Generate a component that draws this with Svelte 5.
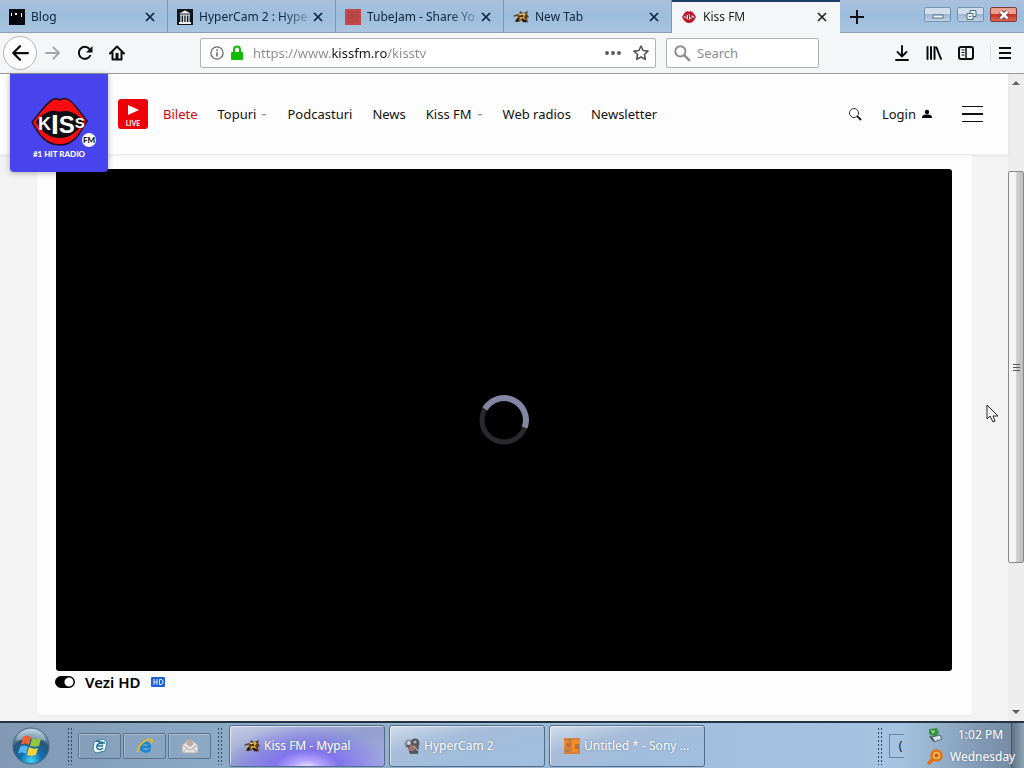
<script lang="ts">
  const tabs = [
    { title: 'Blog', icon: 'blog' },
    { title: 'HyperCam 2 : Hype', icon: 'archive' },
    { title: 'TubeJam - Share Yo', icon: 'jam' },
    { title: 'New Tab', icon: 'mypal' },
    { title: 'Kiss FM', icon: 'kiss' },
  ];

  const links = [
    { label: 'Bilete', hot: true },
    { label: 'Topuri', menu: true },
    { label: 'Podcasturi' },
    { label: 'News' },
    { label: 'Kiss FM', menu: true },
    { label: 'Web radios' },
    { label: 'Newsletter' },
  ];

  const tasks = [
    { title: 'Kiss FM - Mypal', icon: 'mypal' },
    { title: 'HyperCam 2', icon: 'camera' },
    { title: 'Untitled * - Sony ...', icon: 'vegas' },
  ];

  let current = $state('Kiss FM');
  let task = $state('Kiss FM - Mypal');
  let url = $state('https://www.kissfm.ro/kisstv');
  let search = $state('');
  let hd = $state(true);
</script>

{#snippet icon(name: string)}
  <svg class="icon" viewBox="0 0 16 16" width="16" height="16" aria-hidden="true">
    {#if name === 'blog'}
      <rect width="16" height="16" fill="#05070c" />
      <path d="M2 4h1v3H2zM6 4h2v2H6zM12 4h1v4h-1z" fill="#fff" />
    {:else if name === 'archive'}
      <rect width="16" height="16" fill="#10151e" />
      <path d="M2 4.500 8 1.500l6 3zM2 13h12v2H2zM3 5.500h10v1H3z" fill="#eef2f6" />
      <path d="M4 6v7M6.700 6v7M9.300 6v7M12 6v7" stroke="#dfe5eb" stroke-width="1.300" />
    {:else if name === 'jam'}
      <rect width="16" height="16" fill="#c8474b" />
      <path d="M2 3h12M3 6h4v3H3zM9 6h4v3H9zM2 12h12" fill="none" stroke="#9b4a3c" stroke-width="1.200" />
    {:else if name === 'mypal'}
      <path d="M0 7c2-1 3-2 6-2l1-3 3 2 5-2-1 3 2 3-2 1 1 5-3-2-2 2-1-3-3 2H2l2-4z" fill="#57402a" />
      <path d="M5 6l4-2 4 1-2 3 2 3-4-1-4 2 2-3z" fill="#d6a233" />
      <path d="M6 7h4M3 12l3-2M9 10l4 3" stroke="#15100c" stroke-width="1.600" />
      <path d="M6 5l2 1M11 4l1 1M2 8h3" stroke="#f8efd2" />
    {:else if name === 'kiss'}
      <path d="M1 8c2-4 4-6 6-6l1 1 1-1c2 0 4 2 6 6-2 4-4 6-7 6S3 12 1 8z" fill="#c3152b" />
      <path d="M2.500 8q5.500-5 11 0-5.500 5-11 0z" fill="#f3dfe2" />
      <path d="M5 6v4M7.500 6v4M11 6H9.500v2H11v2H9.500" stroke="#731525" fill="none" />
    {:else if name === 'camera'}
      <circle cx="5" cy="6" r="4.500" fill="#8a8f95" />
      <circle cx="11" cy="5" r="4.500" fill="#55595f" />
      <path d="M2 7h13l-1 9H6z" fill="#555a61" />
      <circle cx="8" cy="10" r="3" fill="#a8706a" />
      <circle cx="5" cy="5" r="1.700" fill="#d8dce0" />
      <circle cx="11" cy="4" r="1.500" fill="#aeb4ba" />
      <path d="M10 8l4 5M3 9l2 4" stroke="#c5cad0" />
    {:else}
      <rect width="16" height="16" fill="#d98036" />
      <path d="M0 3h5v3h3V2h8v6h-3v6H8V9H0z" fill="#f28a25" />
      <path d="M2 5h5v4H2zM11 6h4v5h-4z" fill="#b5713f" />
      <path d="M1 13h4M4 2h3" stroke="#a37c61" stroke-width="2" />
    {/if}
  </svg>
{/snippet}

{#snippet cross()}
  <svg viewBox="0 0 12 12" width="12" height="12" aria-hidden="true">
    <path d="M2 2l8 8M10 2l-8 8" stroke="currentColor" stroke-width="1.700" />
  </svg>
{/snippet}

<div class="screen">
  <div class="tabbar">
    {#each tabs as tab}
      <div class="tab" class:active={current === tab.title}>
        <button class="tab-name" onclick={() => (current = tab.title)}>
          {@render icon(tab.icon)}
          <span>{tab.title}</span>
        </button>
        <button class="close" aria-label="Close {tab.title}">{@render cross()}</button>
      </div>
    {/each}
    <button class="new-tab" aria-label="Open a new tab">
      <svg viewBox="0 0 16 16" width="16" height="16"><path d="M8 1v14M1 8h14" stroke="#111" stroke-width="2" /></svg>
    </button>
    <div class="window-buttons">
      <button aria-label="Minimize">
        <svg viewBox="0 0 24 12" width="24" height="12"><rect x="7" y="6" width="10" height="3" fill="#eef5fa" stroke="#58708a" /></svg>
      </button>
      <button aria-label="Restore">
        <svg viewBox="0 0 24 12" width="24" height="12"><path d="M11 1.500h6v6h-3v3H8v-6h3zM11 4.500h3v3M10 7.500h2" fill="#e6eff6" stroke="#526a84" /></svg>
      </button>
      <button class="quit" aria-label="Close window">
        <svg viewBox="0 0 24 12" width="24" height="12"><path d="M8.500 2.500l7 7M15.500 2.500l-7 7" stroke="#7d2f2c" stroke-width="4.500" /><path d="M8.500 2.500l7 7M15.500 2.500l-7 7" stroke="#fff" stroke-width="2.600" /></svg>
      </button>
    </div>
  </div>

  <div class="toolbar">
    <div class="navigation">
      <button class="back" aria-label="Back">
        <svg viewBox="0 0 16 16" width="18" height="18"><path d="M15 8H2M8 2 2 8l6 6" stroke="#0c0c0d" stroke-width="2" fill="none" stroke-linecap="round" stroke-linejoin="round" /></svg>
      </button>
      <button aria-label="Forward">
        <svg viewBox="0 0 16 16" width="16" height="16"><path d="M1 8h13M8.500 2.500 14 8l-5.500 5.500" stroke="#a5a5a5" stroke-width="1.800" fill="none" stroke-linecap="round" stroke-linejoin="round" /></svg>
      </button>
      <button aria-label="Reload">
        <svg viewBox="0 0 16 16" width="16" height="16"><path d="M13.500 10A6 6 0 1 1 12.500 4" stroke="#0c0c0d" stroke-width="2" fill="none" /><path d="M15.500 1v6.500H9z" fill="#0c0c0d" /></svg>
      </button>
      <button aria-label="Home">
        <svg viewBox="0 0 16 16" width="16" height="16"><path d="M1 8.500 8 1.500l7 7M3.500 7v7.500h9V7" stroke="#0c0c0d" stroke-width="2" fill="none" stroke-linejoin="round" stroke-linecap="round" /><path d="M6.500 8h3v6h-3z" fill="#0c0c0d" /></svg>
      </button>
    </div>

    <div class="field address">
      <svg viewBox="0 0 16 16" width="14" height="14"><circle cx="8" cy="8" r="7" fill="none" stroke="#666" stroke-width="1.400" /><path d="M8 7v5M8 4v1.700" stroke="#555" stroke-width="1.600" /></svg>
      <svg viewBox="0 0 14 16" width="14" height="16"><path d="M4 7V4.500a3 3 0 0 1 6 0V7" fill="none" stroke="#12bc00" stroke-width="2" /><rect x="1" y="7" width="12" height="8" rx="1" fill="#12bc00" /></svg>
      <input class="url" type="text" aria-label="Address" bind:value={url} />
      <button aria-label="Page actions">
        <svg viewBox="0 0 16 16" width="16" height="16"><circle cx="2" cy="8" r="1.900" fill="#555" /><circle cx="8" cy="8" r="1.900" fill="#555" /><circle cx="14" cy="8" r="1.900" fill="#555" /></svg>
      </button>
      <button aria-label="Bookmark this page">
        <svg viewBox="0 0 16 16" width="16" height="16"><path d="M8 1l2.100 4.500 4.900.6-3.600 3.400.9 4.900L8 12l-4.300 2.400.9-4.900L1 6.100l4.900-.6z" fill="none" stroke="#555" stroke-width="1.600" stroke-linejoin="round" /></svg>
      </button>
    </div>

    <div class="field find">
      <svg viewBox="0 0 16 16" width="17" height="17"><circle cx="6" cy="6" r="4.800" fill="none" stroke="#8b8b8b" stroke-width="1.800" /><path d="M9.500 9.500 15 15" stroke="#8b8b8b" stroke-width="2.200" /></svg>
      <input type="text" aria-label="Search" placeholder="Search" bind:value={search} />
    </div>

    <div class="tools">
      <button aria-label="Downloads">
        <svg viewBox="0 0 16 16" width="16" height="16"><path d="M8 1v10M3.500 7 8 11.500 12.500 7M2 15h12" fill="none" stroke="#0c0c0d" stroke-width="1.900" stroke-linecap="round" /></svg>
      </button>
      <button aria-label="Library">
        <svg viewBox="0 0 16 16" width="16" height="16"><path d="M1.500 2v12M5 2v12M8.500 2v12M10.500 2.500l4.500 11.500" stroke="#0c0c0d" stroke-width="2" stroke-linecap="round" /></svg>
      </button>
      <button aria-label="Sidebars">
        <svg viewBox="0 0 16 16" width="16" height="16"><rect x="1" y="2" width="14" height="12" rx="2" fill="none" stroke="#0c0c0d" stroke-width="2" /><path d="M8 2v12" stroke="#0c0c0d" stroke-width="1.500" /><path d="M3.500 5h3M3.500 7.500h3M3.500 10h3" stroke="#0c0c0d" /></svg>
      </button>
      <button class="app-menu" aria-label="Open menu">
        <svg viewBox="0 0 16 16" width="16" height="16"><path d="M2 3h12M2 8h12M2 13h12" stroke="#0c0c0d" stroke-width="2" /></svg>
      </button>
    </div>
  </div>

  <div class="viewport">
    <div class="page">
      <header>
        <a class="logo" href="/" aria-label="Kiss FM">
          <svg viewBox="0 0 98 98" width="98" height="98">
            <path d="M22 48c6-6 12-17 20-22 3-2 5-2 8 0 3-2 6-2 9 0 7 5 12 14 18 21-7 11-12 24-27 24S28 59 22 48z" fill="#f80d12" stroke="#191023" stroke-width="1.500" />
            <path d="M26 48c5-7 13-12 20-11q4 1 8 0c8-1 15 5 20 10-6 10-13 17-24 17S32 58 26 48z" fill="#120d14" />
            <text class="kiss" x="28" y="56">
              <tspan font-size="18">K</tspan><tspan font-size="28" dy="4">I</tspan><tspan font-size="24" dy="-1">S</tspan><tspan font-size="15" dy="-5">S</tspan>
            </text>
            <circle cx="79" cy="66" r="7" fill="#fff" />
            <text class="fm" x="79" y="69" text-anchor="middle">FM</text>
            <text class="slogan" x="49" y="83" text-anchor="middle">#1 HIT RADIO</text>
          </svg>
        </a>
        <a class="live" href="/live">
          <svg viewBox="0 0 12 12" width="12" height="12" aria-hidden="true"><path d="M1 1l11 5-11 5z" fill="#fff" /></svg>
          <span>LIVE</span>
        </a>
        <nav>
          {#each links as link}
            <a href="/" class:hot={link.hot}>{link.label}{#if link.menu}<i></i>{/if}</a>
          {/each}
        </nav>
        <div class="account">
          <button aria-label="Search the site">
            <svg viewBox="0 0 14 14" width="14" height="14"><circle cx="6" cy="6" r="4.500" fill="none" stroke="#333" /><path d="M9.200 9.200 13 13" stroke="#111" stroke-width="1.800" /></svg>
          </button>
          <a href="/login">
            Login
            <svg viewBox="0 0 10 10" width="10" height="10" aria-hidden="true"><circle cx="5" cy="3" r="2.200" fill="#000" /><path d="M0 9c0-3 2-3.500 5-3.500s5 .5 5 3.500z" fill="#000" /></svg>
          </a>
          <button class="burger" aria-label="Menu"><i></i><i></i><i></i></button>
        </div>
      </header>

      <main>
        <div class="player">
          <svg viewBox="0 0 52 52" width="52" height="52" role="img" aria-label="Loading">
            <circle cx="26" cy="26" r="22" fill="none" stroke="#29292d" stroke-width="5" />
            <path d="M7 15A22 22 0 0 1 46.700 33.500" fill="none" stroke="#8486a5" stroke-width="6" />
          </svg>
        </div>
        <label class="quality">
          <input type="checkbox" bind:checked={hd} />
          <span>Vezi HD</span>
          <svg viewBox="0 0 14 10" width="14" height="10" aria-hidden="true">
            <rect width="14" height="10" rx="1" fill="#1b62d8" />
            <path d="M3 2v6M6 2v6M3 5h3M8.500 2.500h1.500q2 0 2 2.500t-2 2.500H8.500z" fill="none" stroke="#e9f1ff" />
          </svg>
        </label>
      </main>
    </div>

    <div class="scrollbar">
      <svg viewBox="0 0 8 5" width="8" height="5"><path d="M0 5l4-4 4 4z" fill="#606468" /></svg>
      <div class="track"><div class="thumb"><i></i><i></i><i></i></div></div>
      <svg viewBox="0 0 8 5" width="8" height="5"><path d="M0 0l4 4 4-4z" fill="#55595d" /></svg>
    </div>
  </div>

  <div class="taskbar">
    <button class="start" aria-label="Start">
      <svg viewBox="0 0 38 38" width="38" height="38">
        <defs>
          <radialGradient id="orb" cx="0.5" cy="0.9" r="0.85">
            <stop offset="0" stop-color="#3fd6f5" />
            <stop offset="0.35" stop-color="#146fae" />
            <stop offset="0.7" stop-color="#275477" />
            <stop offset="1" stop-color="#a9c4d6" />
          </radialGradient>
        </defs>
        <circle cx="19" cy="19" r="18" fill="url(#orb)" stroke="#47637e" />
        <path d="M4 14C7 5 14 2 19 2s12 3 15 12c-9-3-21-3-30 0z" fill="#d3e2ec" opacity="0.45" />
        <path d="M11 10c3-2 5-1 8 0l-2 8c-3-2-5-2-8 0z" fill="#ee6130" />
        <path d="M20 11c4 2 6 1 9 0l-2 8c-3 1-6 1-9 0z" fill="#92c83e" />
        <path d="M8 20c3-2 5-2 8 0l-2 7c-3-2-5-2-8 0z" fill="#55b5ef" />
        <path d="M17 20c4 2 6 2 9 1l-2 7c-3 1-6 1-9 0z" fill="#ffd23c" />
      </svg>
    </button>
    <span class="grip"></span>
    <div class="quick">
      <button aria-label="Show desktop">
        <svg viewBox="0 0 18 18" width="18" height="18"><path d="M3 5l9-3 4 3-2 9-9 2-3-3z" fill="#edf7fb" stroke="#3481a5" /><path d="M12 7c-4-2-7 1-6 4 1 2 4 2 6 0M7 9h5M5 4l9 2" fill="none" stroke="#256f98" stroke-width="1.500" /></svg>
      </button>
      <button aria-label="Internet Explorer">
        <svg viewBox="0 0 18 18" width="18" height="18"><path d="M14 12c-2 4-9 3-9-2s8-6 9 0H6" fill="none" stroke="#1687cf" stroke-width="2.600" /><path d="M2 15C1 9 11 0 16 3c1 1 0 2-1 3" fill="none" stroke="#eab62e" stroke-width="1.800" /></svg>
      </button>
      <button aria-label="Mail">
        <svg viewBox="0 0 18 18" width="18" height="18"><path d="M1 8l8-6 8 6v8H1z" fill="#e7e4df" stroke="#aaa9aa" /><path d="M5 7l4-6 4 6-4 3z" fill="#c1a9a0" /><path d="M1 8l8 5 8-5M1 16l6-5M17 16l-6-5" fill="none" stroke="#a5a7ac" /></svg>
      </button>
    </div>
    <span class="grip"></span>
    <div class="tasks">
      {#each tasks as item}
        <button class:active={task === item.title} onclick={() => (task = item.title)}>
          {@render icon(item.icon)}
          <span>{item.title}</span>
        </button>
      {/each}
    </div>
    <span class="grip"></span>
    <button class="language" aria-label="Language">(</button>
    <div class="tray">
      <svg viewBox="0 0 16 16" width="16" height="16"><path d="M2 2l8-1 2 5-4 4-6-3z" fill="#349340" /><path d="M4 3l4 1-2 3z" fill="#a5df8c" /><path d="M5 10l8-2 2 4-8 3z" fill="#d7e2e8" stroke="#496172" /><path d="M3 9l4 5" stroke="#465361" stroke-width="2" /></svg>
      <span>1:02 PM</span>
      <svg viewBox="0 0 16 16" width="16" height="16"><circle cx="9.500" cy="6.500" r="5" fill="#f5b95e" stroke="#e07114" stroke-width="2.500" /><circle cx="9.500" cy="6.500" r="2" fill="#c9560d" /><path d="M6 10l-5 5" stroke="#e07114" stroke-width="3.500" /></svg>
      <span>Wednesday</span>
    </div>
    <button class="desktop" aria-label="Show the desktop"></button>
  </div>

  <svg class="pointer" viewBox="0 0 13 19" width="13" height="19" aria-hidden="true">
    <path d="M1 1v14l3-3 3 6 2-1-2-5h5z" fill="#fff" stroke="#222" />
  </svg>
</div>

<style>
  :global(body) {
    margin: 0;
  }

  .screen {
    position: relative;
    display: flex;
    flex-direction: column;
    min-height: 100vh;
    overflow: hidden;
    font-family: "Noto Sans", "Open Sans", sans-serif;
    font-size: 12px;
    color: #111;
  }

  button {
    display: flex;
    align-items: center;
    justify-content: center;
    padding: 0;
    border: none;
    background: none;
    color: inherit;
    font: inherit;
    cursor: pointer;
  }

  input {
    font: inherit;
  }

  a {
    color: inherit;
    text-decoration: none;
  }

  svg {
    display: block;
    flex: none;
  }

  .tabbar {
    display: flex;
    height: 33px;
    background: linear-gradient(#a9c1dc, #9cbddc 50%, #abc5e0);
    box-shadow: inset 0 -1px #8a9fb5;
  }

  .tab {
    display: flex;
    flex: 0 1 168px;
    min-width: 0;
    box-sizing: border-box;
    padding: 0 11px 0 9px;
    border-right: 1px solid #7d97b2;
    color: #10233c;
  }

  .tab.active {
    border-right-color: transparent;
    background: linear-gradient(#1b3d66 2px, #f5f6f7 2px);
    color: #222;
  }

  .tab-name {
    flex: 1;
    min-width: 0;
    justify-content: flex-start;
    gap: 6px;
  }

  .tab-name span {
    flex: 1;
    overflow: hidden;
    white-space: nowrap;
    text-align: left;
    mask-image: linear-gradient(to right, #000 75%, rgba(0, 0, 0, 0.2));
  }

  .close {
    margin-left: 3px;
  }

  .new-tab {
    width: 34px;
  }

  .window-buttons {
    display: flex;
    gap: 6px;
    margin: 7px 7px 0 auto;
  }

  .window-buttons button {
    width: 27px;
    height: 15px;
    box-sizing: border-box;
    border: 1px solid #7792ad;
    border-radius: 2px;
    background: linear-gradient(#d0deeb 50%, #9bb6d0 50%, #bcd3e7);
  }

  .window-buttons .quit {
    border-color: #813b3f;
    background: linear-gradient(#e8a092 50%, #c43225 50%, #d8664f);
  }

  .toolbar {
    display: flex;
    align-items: center;
    height: 40px;
    padding-right: 11px;
    border-bottom: 1px solid #9a9a9e;
    background: #f5f6f7;
    font-size: 13px;
  }

  .navigation {
    display: flex;
    align-items: center;
    gap: 16px;
    margin-left: 3px;
  }

  .back {
    width: 34px;
    height: 34px;
    box-sizing: border-box;
    margin-right: -8px;
    border: 1px solid #b5b5b8;
    border-radius: 50%;
    background: #fcfcfc;
  }

  .field {
    display: flex;
    align-items: center;
    gap: 6px;
    height: 30px;
    box-sizing: border-box;
    padding: 0 6px 0 9px;
    border: 1px solid #b0b0b5;
    border-radius: 2px;
    background: #fff;
  }

  .field input {
    flex: 1;
    min-width: 0;
    padding: 0;
    border: none;
    outline: none;
    background-color: transparent;
    color: #333;
  }

  .field input::placeholder {
    color: #8a8a8e;
    opacity: 1;
  }

  .address {
    flex: 1;
    margin-left: 75px;
  }

  .address button {
    margin-left: 6px;
  }

  /* the domain part of the address is darker than the rest */
  .field .url {
    margin-left: 3px;
    background-image: linear-gradient(to right, #8a8a8e 78px, #151515 78px 134px, #8a8a8e 134px);
    background-clip: text;
    color: transparent;
    caret-color: #111;
  }

  .find {
    width: 153px;
    margin-left: 10px;
    padding-left: 7px;
  }

  .tools {
    display: flex;
    gap: 16px;
    margin-left: 75px;
  }

  .app-menu {
    padding-left: 6px;
    border-left: 1px solid #dcdcde;
  }

  .viewport {
    display: flex;
    flex: 1;
    background: #f3f3f4;
  }

  .page {
    display: flex;
    flex: 1;
    flex-direction: column;
    min-width: 0;
    font-size: 13px;
  }

  header {
    display: flex;
    align-items: center;
    height: 80px;
    padding: 0 25px 0 10px;
    border-bottom: 1px solid #ececec;
    background: #fdfdfd;
    box-shadow: 0 1px 3px rgba(0, 0, 0, 0.06);
    z-index: 1;
  }

  .logo {
    align-self: flex-start;
    height: 98px;
    border-radius: 0 0 4px 4px;
    background: #4744ee;
    box-shadow: 0 1px 6px rgba(0, 0, 0, 0.3);
  }

  .kiss {
    font-family: "Liberation Sans", sans-serif;
    font-weight: 700;
    fill: #fff;
  }

  .fm {
    font: 900 8px Lato, sans-serif;
    fill: #111;
  }

  .slogan {
    font: 900 8px Lato, sans-serif;
    fill: #fff;
  }

  .live {
    display: flex;
    flex-direction: column;
    align-items: center;
    width: 30px;
    height: 30px;
    box-sizing: border-box;
    margin-left: 10px;
    padding-top: 5px;
    border-radius: 3px;
    background: #ed0008;
    color: #fff;
    font: 700 7px/14px Lato, sans-serif;
  }

  nav {
    display: flex;
    gap: 20px;
    margin-left: 15px;
    white-space: nowrap;
  }

  nav .hot {
    color: #d9000d;
  }

  nav i {
    display: inline-block;
    margin-left: 5px;
    vertical-align: 3px;
    border: 3px solid transparent;
    border-top: 2px solid #a0a0a0;
    border-bottom: none;
  }

  .account {
    display: flex;
    align-items: center;
    gap: 20px;
    margin-left: auto;
  }

  .account a {
    display: flex;
    align-items: center;
    gap: 6px;
  }

  .burger {
    flex-direction: column;
    gap: 6px;
    margin-left: 10px;
  }

  .burger i {
    width: 21px;
    height: 1px;
    background: #111;
  }

  .burger i:nth-child(2) {
    height: 2px;
  }

  main {
    display: flex;
    flex: 1;
    flex-direction: column;
    margin: 0 36px 6px 37px;
    padding: 14px 20px 22px 19px;
    border-radius: 0 0 4px 4px;
    background: #fdfdfd;
    box-shadow: 0 1px 2px rgba(0, 0, 0, 0.05);
  }

  .player {
    display: flex;
    flex: 1;
    align-items: center;
    justify-content: center;
    min-height: 300px;
    border-radius: 3px;
    background: #000;
  }

  .quality {
    display: flex;
    align-items: center;
    align-self: flex-start;
    gap: 10px;
    height: 22px;
    font: 600 15px/22px "Noto Sans", sans-serif;
    color: #000;
  }

  .quality input {
    width: 20px;
    height: 12px;
    margin: 0 0 0 -1px;
    appearance: none;
    border: 1px solid #000;
    border-radius: 6px;
    background: radial-gradient(circle at 5px 5px, #fff 4px, #000 5px);
  }

  .quality input:checked {
    background: radial-gradient(circle at 13px 5px, #fff 4px, #000 5px);
  }

  .scrollbar {
    display: flex;
    flex-direction: column;
    align-items: center;
    width: 16px;
    padding: 6px 0;
    box-sizing: border-box;
    background: #ededee;
  }

  .track {
    display: flex;
    flex: 1;
    flex-direction: column;
    align-self: stretch;
    padding: 86px 0 147px;
  }

  .thumb {
    display: flex;
    flex: 1;
    flex-direction: column;
    align-items: center;
    justify-content: center;
    gap: 2px;
    border: 1px solid #898989;
    border-radius: 2px;
    background: linear-gradient(to right, #f5f5f5 45%, #cfcfcf 55%, #bdbdbd);
  }

  .thumb i {
    width: 7px;
    height: 1px;
    background: #555;
  }

  .taskbar {
    display: flex;
    align-items: center;
    height: 45px;
    border-top: 2px solid #25323f;
    background: linear-gradient(to right, #8199b3, #8ba8c5 20%, #9fbedc 60%, #a5c3e0 88%, #8098b2 96%, #70879e);
    color: #fff;
    text-shadow: 0 0 2px #5d7590;
  }

  .start {
    margin: 0 17px 0 12px;
  }

  .grip {
    width: 6px;
    height: 38px;
    background: radial-gradient(circle, #33465a 1px, transparent 1px) 0 0 / 3px 4px;
  }

  .quick {
    display: flex;
    gap: 2px;
    margin: 0 6px 0 5px;
  }

  .quick button {
    width: 43px;
    height: 26px;
    box-sizing: border-box;
    border: 1px solid #5c728a;
    border-radius: 2px;
    box-shadow: inset 1px 1px rgba(255, 255, 255, 0.25);
  }

  .tasks {
    display: flex;
    flex: 1;
    gap: 4px;
    min-width: 0;
    margin-left: 6px;
  }

  .tasks button {
    flex: 0 1 156px;
    min-width: 0;
    justify-content: flex-start;
    gap: 4px;
    height: 42px;
    box-sizing: border-box;
    padding-left: 14px;
    border: 1px solid #536c87;
    border-radius: 3px;
    background: linear-gradient(165deg, #d0dcea, #a5bcda 35%, #9fbfde);
    box-shadow: inset 1px 1px rgba(255, 255, 255, 0.6);
    color: inherit;
    text-shadow: inherit;
    white-space: nowrap;
  }

  .tasks .active {
    background: radial-gradient(ellipse at 50% 108%, #fff, #b7a5ff 14%, #8274ee 30%, transparent 75%), linear-gradient(165deg, #c5cce4, #919fce 50%, #a4abe4);
  }

  .language {
    width: 15px;
    height: 24px;
    box-sizing: border-box;
    margin: 0 23px 0 6px;
    padding-left: 7px;
    border: 1px solid #6c849d;
    border-right: none;
    color: #111;
    text-shadow: none;
  }

  .tray {
    display: grid;
    grid-template-columns: 16px 61px;
    column-gap: 7px;
    align-items: center;
    line-height: 22px;
    z-index: 1;
  }

  .tray span {
    text-align: center;
    white-space: nowrap;
  }

  .desktop {
    width: 13px;
    align-self: stretch;
    border-left: 1px solid #435569;
    background: linear-gradient(to right, #5f7488, #8fa3b5);
  }

  .pointer {
    position: absolute;
    top: 404px;
    right: 25px;
    pointer-events: none;
  }
</style>
